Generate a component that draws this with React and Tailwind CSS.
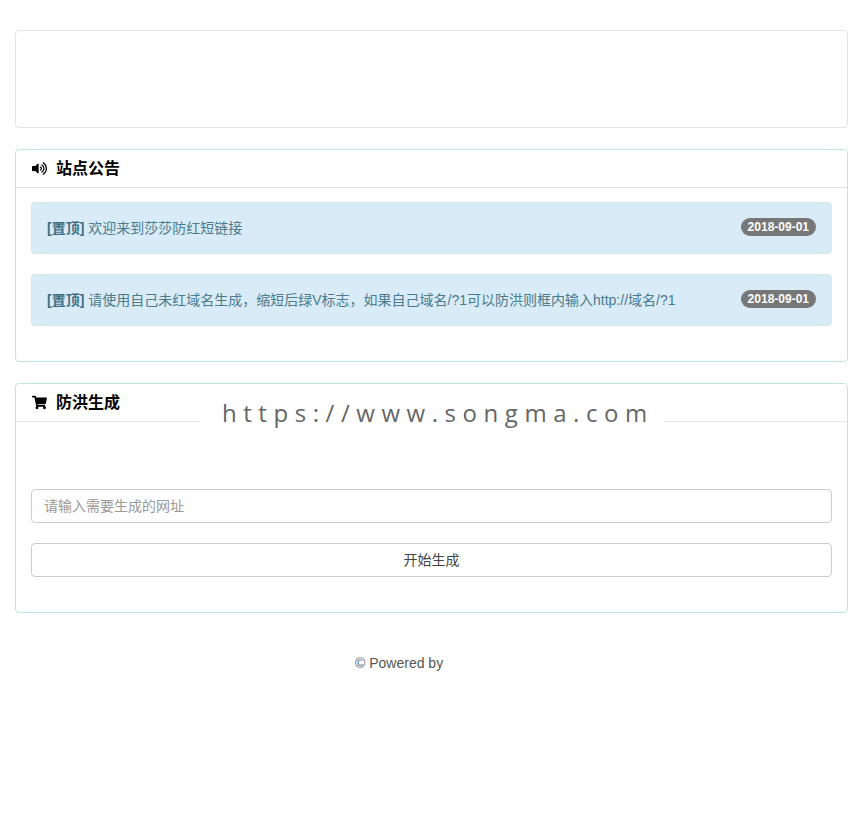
import { FaShoppingCart, FaVolumeUp } from "react-icons/fa";

const cjk = "font-['Liberation_Sans','Noto_Sans_CJK_SC',sans-serif]";

function Notice({ children }) {
  return (
    <div className="h-[52px] px-[15px] flex items-center justify-between bg-[#d9ebf6] border border-[#d0e9f1] rounded text-sm text-[#4a7b8e]">
      <span><b className="font-bold text-[#3d7086]">[置顶]</b> {children}</span>
      <span className="h-[18px] mb-[2px] px-[7px] flex items-center rounded-[10px] bg-[#777777] text-white text-xs font-bold">2018-09-01</span>
    </div>
  );
}

function PanelHeader({ icon, title }) {
  return (
    <div className="h-[38px] px-[15px] flex items-center gap-2 bg-white border-b border-[#e3e3e3] rounded-t text-black">
      <span className="w-[17px] flex justify-center text-[15px]">{icon}</span>
      <h3 className="text-base font-bold">{title}</h3>
    </div>
  );
}

export default function App() {
  return (
    <div className={`relative min-h-[826px] bg-white px-[15px] pt-[30px] text-[#555555] ${cjk}`}>
      <div className="h-[98px] mb-[21px] border border-[#e3e3e3] rounded bg-white" />

      <div className="mb-[21px] border border-[#bde6df] rounded bg-white">
        <PanelHeader icon={<FaVolumeUp />} title="站点公告" />
        <div className="px-[15px] pt-[14px] pb-[35px] flex flex-col gap-5">
          <Notice>欢迎来到莎莎防红短链接</Notice>
          <Notice>请使用自己未红域名生成，缩短后绿V标志，如果自己域名/?1可以防洪则框内输入http://域名/?1</Notice>
        </div>
      </div>

      <div className="border border-[#bde6df] rounded bg-white">
        <PanelHeader icon={<FaShoppingCart />} title="防洪生成" />
        <div className="px-[15px] pt-[67px] pb-[35px] flex flex-col gap-5">
          <input
            placeholder="请输入需要生成的网址"
            className="h-[34px] px-3 border border-[#cccccc] rounded text-sm placeholder:text-[#999999] outline-none"
          />
          <button className="h-[34px] border border-[#cccccc] rounded bg-white text-sm text-[#444444]">开始生成</button>
        </div>
      </div>

      <p className="mt-10 pl-[340px] text-sm leading-5">© Powered by</p>

      {/* watermark over the third panel */}
      <div className="absolute left-[200px] top-[398px] w-[464px] h-[32px] pb-[2px] pl-[22px] bg-white flex items-center font-['Open_Sans',sans-serif] text-2xl tracking-[6.55px] text-[#666666]">
        https://www.songma.com
      </div>
    </div>
  );
}
